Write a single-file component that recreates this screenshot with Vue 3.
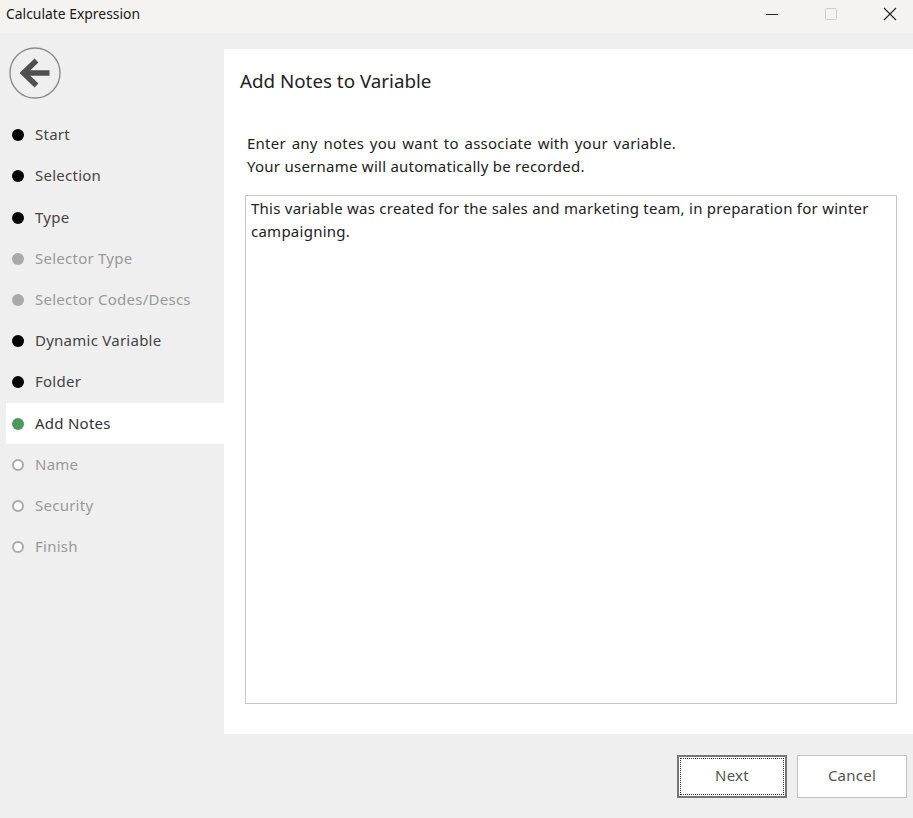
<script setup>
const steps = [
  { label: 'Start', state: 'done' },
  { label: 'Selection', state: 'done' },
  { label: 'Type', state: 'done' },
  { label: 'Selector Type', state: 'skipped' },
  { label: 'Selector Codes/Descs', state: 'skipped' },
  { label: 'Dynamic Variable', state: 'done' },
  { label: 'Folder', state: 'done' },
  { label: 'Add Notes', state: 'active' },
  { label: 'Name', state: 'todo' },
  { label: 'Security', state: 'todo' },
  { label: 'Finish', state: 'todo' }
]
</script>

<template>
  <div class="window">
    <!-- title bar -->
    <header class="titlebar">
      <span class="title">Calculate Expression</span>
      <div class="controls">
        <svg class="ctl" width="14" height="14" viewBox="0 0 14 14"><path d="M1 7.5h12" stroke="#222" stroke-width="1" fill="none" /></svg>
        <svg class="ctl" width="14" height="14" viewBox="0 0 14 14"><rect x="1.5" y="1.5" width="11" height="11" rx="1" stroke="#cfcdcb" stroke-width="1" fill="none" /></svg>
        <svg class="ctl" width="14" height="14" viewBox="0 0 14 14"><path d="M1 1l12 12M13 1L1 13" stroke="#222" stroke-width="1.1" fill="none" /></svg>
      </div>
    </header>

    <div class="middle">
      <!-- wizard steps -->
      <aside class="sidebar">
        <button class="back">
          <svg width="52" height="52" viewBox="0 0 52 52">
            <circle cx="26" cy="26" r="25" fill="none" stroke="#8c8c8c" stroke-width="1.4" />
            <path d="M40.5 26H17" stroke="#505050" stroke-width="5.5" fill="none" />
            <path d="M27.5 13.5L14.5 26L27.5 38.5" stroke="#505050" stroke-width="5.5" fill="none" />
          </svg>
        </button>
        <ul class="steps">
          <li v-for="s in steps" :key="s.label" class="step" :class="s.state">
            <span class="dot"></span>
            <span class="label">{{ s.label }}</span>
          </li>
        </ul>
      </aside>

      <!-- page content -->
      <main class="content">
        <h1 class="heading">Add Notes to Variable</h1>
        <div class="intro">
          <p class="first">Enter any notes you want to associate with your variable.</p>
          <p>Your username will automatically be recorded.</p>
        </div>
        <div class="notes">This variable was created for the sales and marketing team, in preparation for winter campaigning.</div>
      </main>
    </div>

    <footer class="footer">
      <button class="btn primary"><span class="focus">Next</span></button>
      <button class="btn">Cancel</button>
    </footer>
  </div>
</template>

<style>
html, body {
  margin: 0;
  background: #efefef;
}
</style>

<style scoped>
.window {
  width: 913px;
  height: 818px;
  display: flex;
  flex-direction: column;
  background: #efefef;
  font-family: "Noto Sans", "Open Sans", sans-serif;
  font-size: 15px;
  letter-spacing: 0.25px;
  color: #222;
  overflow: hidden;
}

.titlebar {
  height: 33px;
  flex: none;
  display: flex;
  align-items: center;
  justify-content: space-between;
  background: #f5f2ef;
  padding-left: 6px;
}

.title {
  font-size: 13.9px;
  letter-spacing: 0;
  color: #1a1a1a;
  padding-bottom: 7px;
}

.controls {
  display: flex;
  align-items: center;
  gap: 45px;
  padding-right: 16px;
  padding-bottom: 5px;
}

.middle {
  flex: 1;
  display: flex;
  padding-top: 16px;
  min-height: 0;
}

.sidebar {
  width: 224px;
  flex: none;
  padding-left: 6px;
  box-sizing: border-box;
}

.back {
  display: block;
  border: 0;
  background: none;
  padding: 0 0 0 3px;
  margin: -2px 0 17.6px;
  height: 50px;
}

.steps {
  list-style: none;
  margin: 0;
  padding: 0;
}

.step {
  height: 41.2px;
  display: flex;
  align-items: center;
  padding-left: 6px;
  gap: 11px;
  color: #444;
}

.label {
  position: relative;
  top: -1px;
}

.dot {
  width: 12px;
  height: 12px;
  border-radius: 50%;
  box-sizing: border-box;
  background: #000;
  flex: none;
}

.step.skipped {
  color: #999;
}

.step.skipped .dot {
  background: #aaa;
}

.step.active {
  background: #fff;
  color: #333;
}

.step.active .dot {
  background: #4a9a5c;
}

.step.todo {
  color: #999;
}

.step.todo .dot {
  background: #fff;
  border: 2px solid #aaa;
}

.content {
  flex: 1;
  background: #fff;
  padding: 18px 16px 30px 16px;
  display: flex;
  flex-direction: column;
  min-width: 0;
}

.heading {
  margin: 0;
  font-size: 18.8px;
  letter-spacing: 0;
  font-weight: 400;
  line-height: 28px;
  color: #222;
}

.intro {
  margin: 37px 0 0 7px;
  line-height: 23px;
}

.intro p {
  margin: 0;
}

.intro .first {
  word-spacing: 1.55px;
}

.notes {
  flex: 1;
  margin: 17px 0 0 5px;
  border: 1px solid #c8c8c8;
  padding: 1px 20px 0 5px;
  line-height: 23px;
  box-sizing: border-box;
}

.footer {
  height: 84px;
  flex: none;
  display: flex;
  justify-content: flex-end;
  align-items: flex-start;
  gap: 10px;
  padding: 21px 6px 0 0;
  box-sizing: border-box;
}

.btn {
  width: 110px;
  height: 43px;
  background: #fff;
  border: 1px solid #c4c4c4;
  font: inherit;
  letter-spacing: 0.25px;
  color: #555;
  padding: 0 0 4px;
}

.btn.primary {
  border: 2px solid #777;
  padding: 1px;
}

.focus {
  display: flex;
  align-items: center;
  justify-content: center;
  height: 100%;
  padding-bottom: 3px;
  border: 1px dotted #333;
  box-sizing: border-box;
}
</style>
